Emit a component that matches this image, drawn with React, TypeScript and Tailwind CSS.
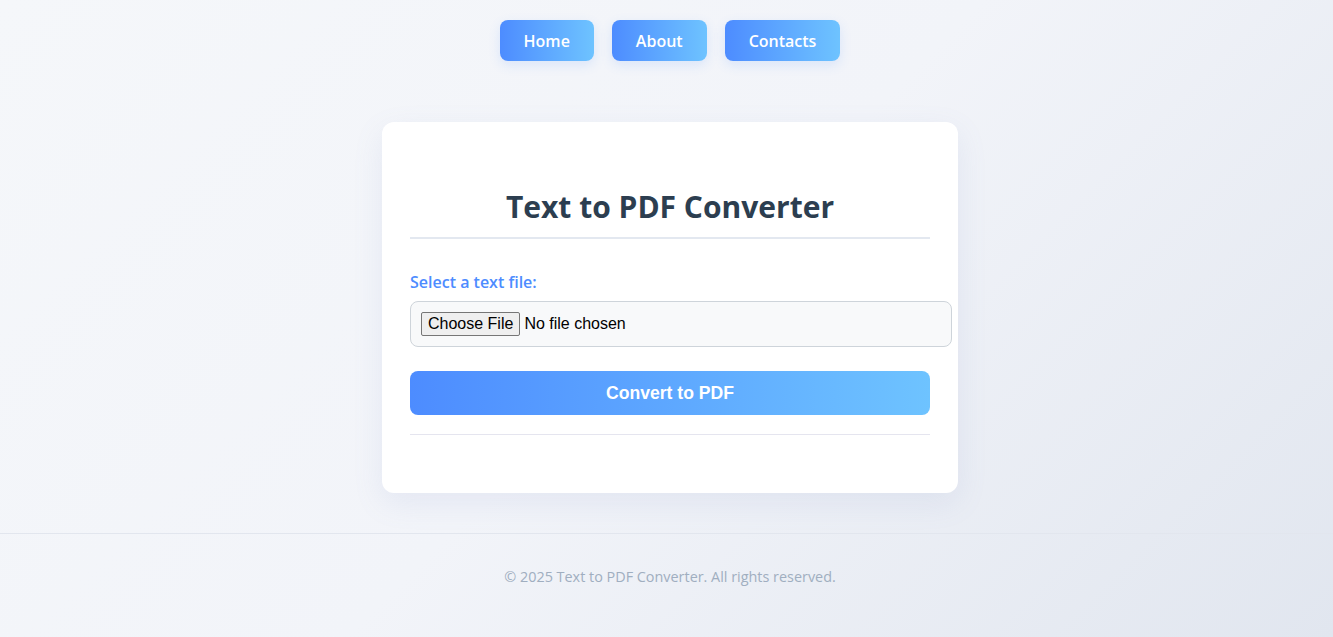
import React from "react";

const navItems = ["Home", "About", "Contacts"];

const App = () => {
  return (
    <div className="min-h-screen flex flex-col bg-[linear-gradient(135deg,#f5f7fa_0%,#f2f4f9_50%,#e1e6ef_100%)] font-['Open_Sans',sans-serif]">
      <nav className="flex justify-center gap-[18px] pt-5 pl-[7px]">
        {navItems.map((item) => (
          <a
            key={item}
            href="#"
            className="h-[41px] px-6 flex items-center rounded-lg text-white text-[16px] font-semibold bg-[linear-gradient(90deg,#4d8cff,#6ec3ff)] shadow-[0_4px_12px_rgba(77,140,255,0.15)]"
          >
            {item}
          </a>
        ))}
      </nav>

      <main className="flex-1 flex justify-center pl-[7px]">
        <div className="w-[576px] mt-[61px] mb-[38px] self-start bg-white rounded-xl px-7 pt-[65px] pb-[58px] shadow-[0_10px_30px_rgba(120,140,200,0.12)]">
          <h1 className="text-center text-[30px] leading-[40px] font-bold text-[#2c3e50] pb-[10px] border-b-2 border-[#e3e8f0]">
            Text to PDF Converter
          </h1>

          <label className="block mt-[32px] text-[16px] leading-[22px] font-semibold text-[#4d8cff]">
            Select a text file:
          </label>
          <input
            type="file"
            className="box-content block w-full mt-[8px] px-[10px] pt-[10px] pb-[10px] border border-[#ced4da] rounded-lg bg-[#f8f9fa] text-[16px] leading-[24px] font-['Liberation_Sans',sans-serif] text-black file:mr-[4px] file:px-[6px] file:py-0 file:leading-[22px] file:border file:border-[#767676] file:rounded-[2px] file:bg-[#efefef] file:text-black"
          />

          <button className="w-full h-[44px] mt-6 rounded-lg text-white text-[17.6px] font-bold font-['Liberation_Sans',sans-serif] bg-[linear-gradient(90deg,#4d8cff,#6ec3ff)]">
            Convert to PDF
          </button>

          <hr className="mt-[19px] border-t border-[#e5e5ef]" />
        </div>
      </main>

      <footer className="border-t border-[#e2e6ee] pt-[31px] pb-[48px] pl-[7px] text-center text-[14.4px] leading-[24px] text-[#a0aec0]">
        © 2025 Text to PDF Converter. All rights reserved.
      </footer>
    </div>
  );
};

export default App;
